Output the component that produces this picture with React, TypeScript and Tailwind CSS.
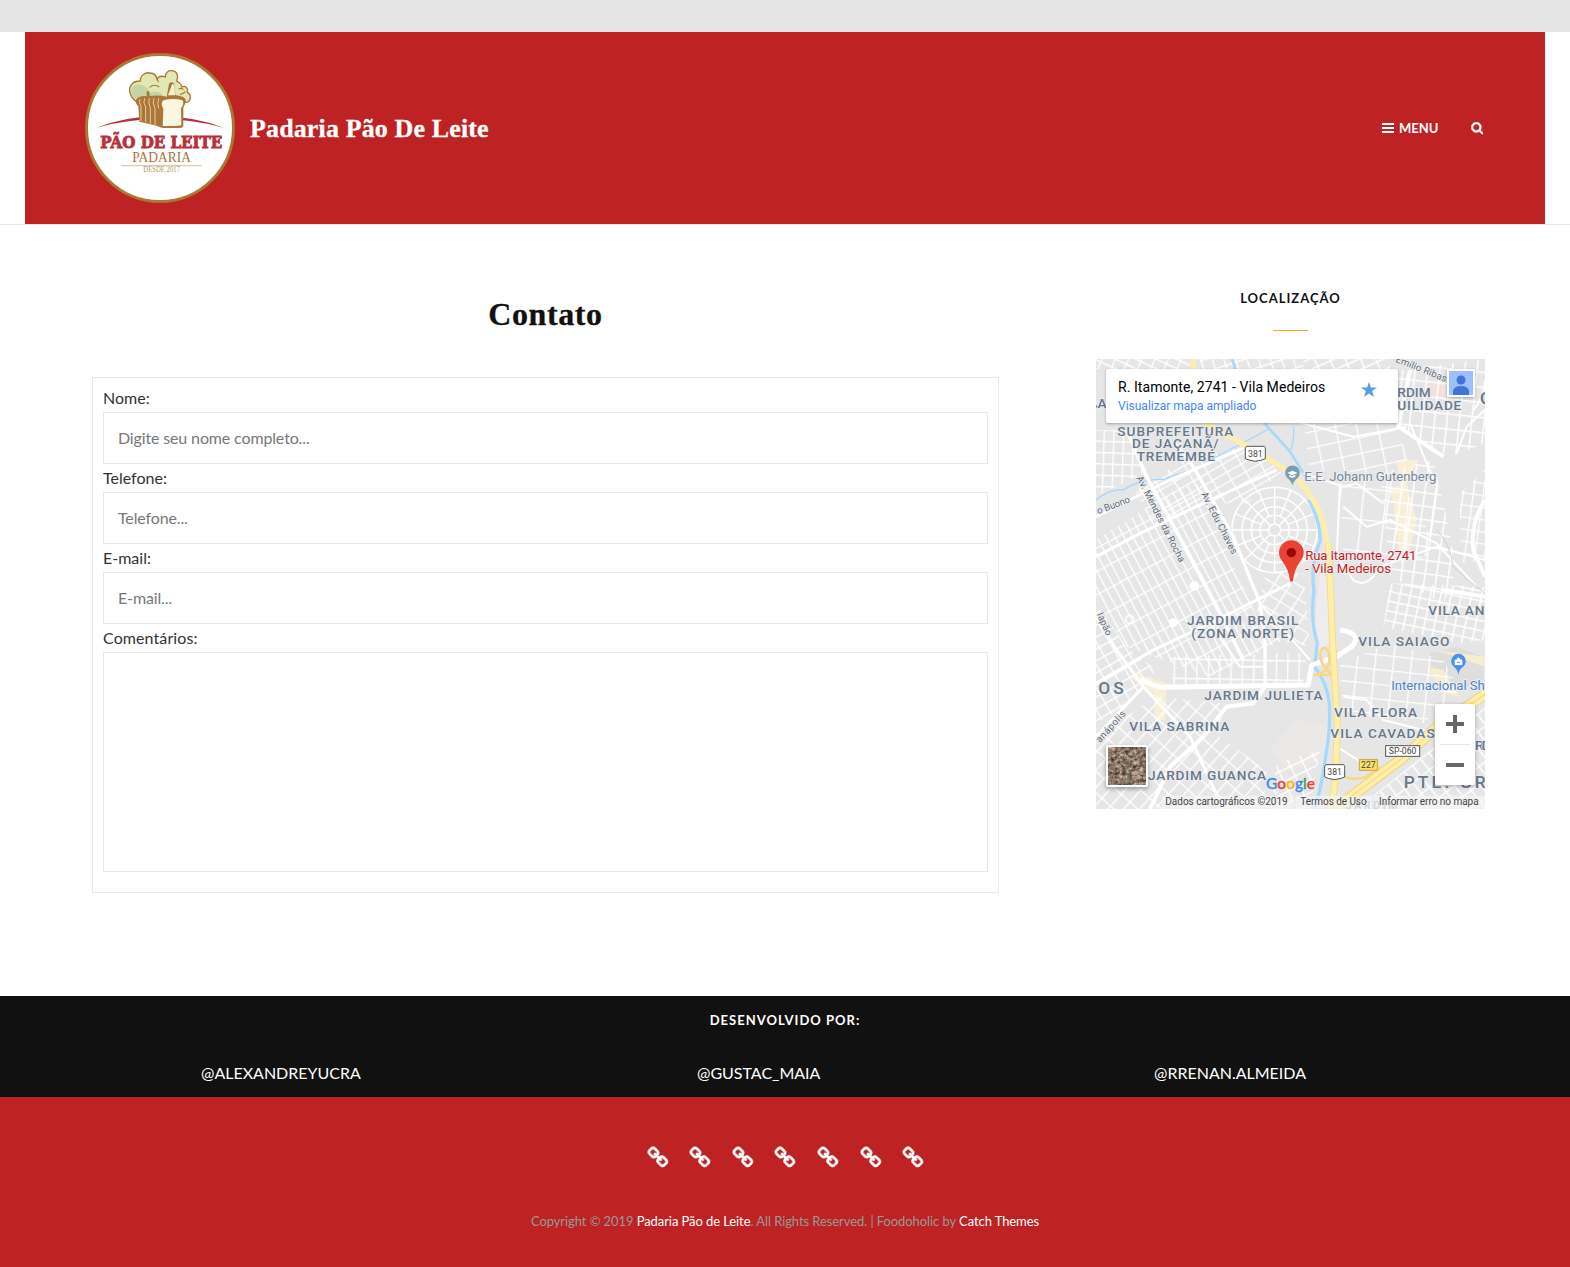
import React from "react";

const CHAIN =
  "M1456 1216q0-40-28-68l-208-208q-28-28-68-28-42 0-72 32 3 3 19 18.5t21.5 21.5 15 19 13 25.5 3.5 27.5q0 40-28 68t-68 28q-15 0-27.5-3.5t-25.5-13-19-15-21.5-21.5-18.5-19q-33 31-33 73 0 40 28 68l206 207q27 27 68 27 40 0 68-26l147-146q28-28 28-67zm-703-705q0-40-28-68l-206-207q-28-28-68-28-39 0-68 27l-147 146q-28 28-28 67 0 40 28 68l208 208q27 27 68 27 42 0 72-31-3-3-19-18.5t-21.5-21.5-15-19-13-25.5-3.5-27.5q0-40 28-68t68-28q15 0 27.5 3.5t25.5 13 19 15 21.5 21.5 18.5 19q33-31 33-73zm895 705q0 120-85 203l-147 146q-83 83-203 83-121 0-204-85l-206-207q-83-83-83-203 0-123 88-209l-88-88q-86 88-208 88-120 0-204-84l-208-208q-84-84-84-204t85-203l147-146q83-83 203-83 121 0 204 85l206 207q83 83 83 203 0 123-88 209l88 88q86-88 208-88 120 0 204 84l208 208q84 84 84 204z";
const SEARCH =
  "M1216 832q0-185-131.5-316.5t-316.5-131.5-316.5 131.5-131.5 316.5 131.5 316.5 316.5 131.5 316.5-131.5 131.5-316.5zm512 832q0 52-38 90t-90 38q-54 0-90-38l-343-342q-179 124-399 124-143 0-273.5-55.5t-225-150-150-225-55.5-273.5 55.5-273.5 150-225 225-150 273.5-55.5 273.5 55.5 225 150 150 225 55.5 273.5q0 220-124 399l343 343q37 37 37 90z";

function Logo() {
  return (
    <svg viewBox="15 24 450 450" className="block size-[150px] shrink-0">
      <circle cx="240" cy="249" r="220.500" fill="#fff" stroke="#ab7637" strokeWidth="9" />
      <path d="M50 248Q145 212 240 214Q340 214 431 248Q335 222 240 222Q145 222 50 248Z" fill="#b9303a" />
      <path
        d="M172 172C152 160 142 135 154 120C160 110 170 108 181 108C180 92 196 80 210 84C224 85 229 92 231 102C236 94 246 92 256 96C255 82 266 76 276 77C292 79 297 94 290 108C300 114 305 118 306 126C316 120 326 130 322 142C334 148 334 166 322 172Z"
        fill="#e0e9b4"
        stroke="#ab7637"
        strokeWidth="4"
      />
      <path d="M170 168C156 158 148 138 158 126C168 114 190 118 202 130C210 136 208 146 214 142C230 136 245 142 252 156L180 166Z" fill="#c5d3a5" />
      <path d="M209 127Q223 115 238 126M231 102Q236 108 234 112M296 132Q304 128 310 134M300 148Q312 146 316 140" fill="none" stroke="#ab7637" strokeWidth="3.500" />
      <path d="M168 164Q180 150 200 154L200 140Q204 136 208 140L209 153Q235 149 260 155L261 150L267 116Q275 108 283 116L286 150Q320 154 318 170L310 188V242Q308 249 300 249H250Q240 248 230 242L178 230L175 184Q166 176 168 164Z" fill="#ab7637" />
      <path d="M277 116L283 119L285 151H264Z" fill="#f8f3d2" />
      <path d="M250 166Q280 158 308 166Q314 178 303 190L304 240Q300 244 248 243L250 192Q240 176 250 166Z" fill="#faf6df" />
      <path
        d="M180 162Q176 172 183 184V228M194 160Q188 174 197 186V232M208 160Q203 174 211 188V236M222 160Q216 174 225 190V240M236 160Q231 176 236 190"
        fill="none"
        stroke="#efe0b9"
        strokeWidth="2.500"
      />
      <text x="61" y="310" textLength="366" lengthAdjust="spacingAndGlyphs" fontFamily="DejaVu Serif" fontWeight="700" fontSize="48" fill="#b9303a" stroke="#b9303a" strokeWidth="2.500">PÃO DE LEITE</text>
      <text x="157" y="352" textLength="176" lengthAdjust="spacingAndGlyphs" fontFamily="Liberation Serif" fontSize="43" fill="#ab7637">PADARIA</text>
      <path d="M124 362H365" stroke="#d9bd97" strokeWidth="3" />
      <text x="190" y="382" textLength="110" lengthAdjust="spacingAndGlyphs" fontFamily="Liberation Serif" fontSize="22" fill="#b8935f">DESDE 2017</text>
    </svg>
  );
}

type PatchData = { id: string; w: number; h: number; a: number; d: string; s?: number };

/* Blocks of minor streets: each polygon is filled with a rotated street grid. */
const patches: PatchData[] = [
  { id: "w1", w: 24, h: 62, a: -28, d: "M18 810L270 650L330 640L520 1090L600 1100L360 1220L110 1130L18 990Z", s: 4 },
  { id: "w2", w: 34, h: 31, a: -30, d: "M18 1000L110 1130L200 1200L90 1320L18 1360Z", s: 4 },
  { id: "w3", w: 50, h: 27, a: -30, d: "M130 660L300 560L470 530L580 600L470 700L350 700L200 770Z", s: 4 },
  { id: "w4", w: 29, h: 34, a: 2, d: "M18 480L120 480L160 610L18 680Z", s: 4 },
  { id: "n1", w: 36, h: 26, a: 25, d: "M18 267H300V297H18Z", s: 4 },
  { id: "n2", w: 33, h: 36, a: -18, d: "M330 267H640V297H330Z", s: 4 },
  { id: "n3", w: 42, h: 30, a: -24, d: "M640 267H900V300H640Z", s: 5 },
  { id: "n4", w: 37, h: 45, a: 6, d: "M925 300L1185 267V520L1080 560L960 500L925 460Z", s: 5 },
  { id: "n5", w: 62, h: 47, a: -12, d: "M640 460L900 460L960 560L900 610L660 600Z", s: 4 },
  { id: "c1", w: 68, h: 94, a: 6, d: "M750 650L880 620L980 700L1040 850L940 880L760 840Z", s: 4 },
  { id: "e1", w: 35, h: 40, a: 8, d: "M870 610L1030 570L1070 740L1100 900L1060 1000L900 920Z", s: 5 },
  { id: "e2", w: 30, h: 29, a: 12, d: "M900 940L1185 950V1110L1100 1120L880 1070Z", s: 5 },
  { id: "e3", w: 30, h: 36, a: 8, d: "M1110 670L1185 600V870L1110 880Z", s: 4 },
  { id: "e4", w: 54, h: 44, a: 6, d: "M750 1180L900 1120L1060 1170L1110 1260L1000 1360L760 1330Z", s: 4 },
  { id: "s1", w: 34, h: 58, a: 1, d: "M240 1160L530 1150L650 1150L640 1240L250 1250Z", s: 4 },
  { id: "s2", w: 35, h: 48, a: 42, d: "M18 1400L200 1280L400 1300L390 1400L530 1500L520 1617H18Z", s: 4 },
  { id: "s3", w: 31, h: 42, a: -38, d: "M800 1617L1185 1310V1617Z", s: 5 },
  { id: "s4", w: 42, h: 36, a: 32, d: "M530 900L640 910L660 1130L560 1110L500 1020Z", s: 4 },
  { id: "s5", w: 38, h: 32, a: -26, d: "M560 1480L690 1440L660 1617H540Z", s: 4 },
];

const spokes = Array.from({ length: 16 }, (_, i) => (i * Math.PI) / 8);

const areaLabels: [string, number, number, number, number?][] = [
  ["JA", 14, 415, 36],
  ["RDIM", 922, 382, 100],
  ["UILIDADE", 922, 421, 192],
  ["SUBPREFEITURA", 82, 497, 348],
  ["DE JAÇANÃ/", 126, 535, 260],
  ["TREMEMBÉ", 140, 574, 235],
  ["JARDIM BRASIL", 291, 1066, 334],
  ["(ZONA NORTE)", 304, 1105, 308],
  ["VILA AN", 1015, 1034, 168],
  ["VILA SAIAGO", 805, 1129, 273],
  ["OS", 25, 1271, 76, 52],
  ["JARDIM JULIETA", 343, 1289, 355],
  ["VILA FLORA", 732, 1342, 249],
  ["VILA SABRINA", 118, 1384, 300],
  ["VILA CAVADAS", 721, 1403, 313],
  ["RD", 1155, 1440, 46],
  ["JARDIM GUANCA", 174, 1531, 354],
  ["PTE. GR", 941, 1554, 246, 52],
  ["JARDIM", 768, 1617, 154, 30],
];

function MapDrawing() {
  return (
    <svg viewBox="18 267 1167 1350" preserveAspectRatio="none" className="block h-[450px] w-[389px]" fontFamily="Roboto">
      <defs>
        {patches.map((p) => (
          <pattern key={p.id} id={p.id} width={p.w} height={p.h} patternUnits="userSpaceOnUse" patternTransform={`rotate(${p.a})`}>
            <path d={`M0 2H${p.w}M2 0V${p.h}`} stroke="#fff" strokeWidth={p.s} />
          </pattern>
        ))}
      </defs>
      <rect x="18" y="267" width="1167" height="1350" fill="#e6e6e6" />
      <path d="M690 900L712 930L718 1120L680 1150L672 1080Z" fill="#eeecec" />
      <path d="M540 1440L620 1350L718 1370L700 1480L600 1500Z" fill="#ebe9e7" />
      <path d="M1020 330L1060 350L1070 385H1025Z" fill="#f5dede" />
      <path d="M1020 1150L1100 1130L1180 1160V1230L1080 1270L1020 1200Z" fill="#dedede" />
      <path d="M1010 1190L1060 1200L1110 1280L1060 1270ZM1030 1140L1185 1160V1190L1100 1160Z" fill="#f7edcf" />
      <path d="M140 1210L230 1240L225 1350H195L190 1270L120 1220ZM920 570L985 570L950 640L980 750L960 840H925L910 700L895 650H930Z" fill="#f8efd6" />

      {patches.map((p) => (
        <path key={p.id} d={p.d} fill={`url(#${p.id})`} />
      ))}

      {/* radial neighbourhood */}
      <circle cx="560" cy="780" r="118" fill="#e6e6e6" />
      <g fill="none" stroke="#fff" strokeWidth="4.500">
        <circle cx="554" cy="780" r="18" />
        <circle cx="554" cy="780" r="44" />
        <circle cx="554" cy="780" r="70" />
        <circle cx="554" cy="780" r="98" />
        <circle cx="554" cy="780" r="128" />
        {spokes.map((t, i) => {
          const inner = i % 2 ? 44 : 18;
          return <path key={t} d={`M${554 + inner * Math.cos(t)} ${780 + inner * Math.sin(t)}L${554 + 128 * Math.cos(t)} ${780 + 128 * Math.sin(t)}`} />;
        })}
      </g>

      {/* water */}
      <g fill="none" stroke="#a8d8fb">
        <path d="M425 267Q436 285 436 310L525 462L600 545L650 625" strokeWidth="8" />
        <path d="M655 690Q692 750 690 815Q660 880 672 960Q660 1050 682 1120L674 1190Q712 1240 718 1300Q722 1380 708 1450Q700 1530 674 1617" strokeWidth="10" />
        <path d="M18 690Q60 655 100 660Q150 625 220 628Q270 610 310 600L380 560L535 478M610 470Q615 510 600 545" strokeWidth="4" />
      </g>

      {/* local avenues */}
      <g fill="none" stroke="#fff" strokeWidth="9" strokeLinejoin="round">
        <path d="M18 740L240 630L470 530M18 860L150 790L360 690L560 600M18 1240L190 1140L360 1060L600 940" />
        <path d="M110 480L170 620L290 840L380 1010L460 1170" strokeWidth="11" />
        <path d="M255 520L310 590L430 800L510 1000L525 1120V1250" strokeWidth="10" />
        <path d="M18 1040L80 1140L160 1250L300 1400L400 1617M18 1400L160 1250" />
        <path d="M360 1060L450 1190H520M510 1000L660 1170M600 450L790 500L950 470M640 610L760 650L800 640L880 700" strokeWidth="6" />
        <path d="M750 640L740 860L790 930Q830 960 870 890L1040 830L1185 870M760 710L830 770L900 750L1040 820L1160 950" strokeWidth="6" />
        <path d="M1185 690Q1140 760 1150 840L1185 920M1185 980L1060 960M960 300L925 470L1060 560" strokeWidth="12" />
        <path d="M960 460L1040 650L1020 800M1100 550L1130 470L1185 420M1150 420Q1185 380 1185 330" strokeWidth="6" />
        <path d="M750 1080Q820 1090 785 1130L740 1160L665 1185L655 1245L210 1252L150 1230" strokeWidth="15" />
        <path d="M525 1250L490 1300L410 1310L330 1410L240 1490L180 1617" strokeWidth="12" />
        <path d="M760 1280L830 1290L880 1350L1000 1380L1060 1420M740 1430L850 1500" strokeWidth="6" />
        <circle cx="313" cy="948" r="10" fill="#fff" />
        <circle cx="119" cy="1048" r="12" strokeWidth="5" />
        <circle cx="250" cy="1058" r="9" fill="#fff" />
      </g>
      <path d="M1040 780Q1080 820 1090 890Q1130 930 1185 970" fill="none" stroke="#c9d3de" strokeWidth="3" />

      {/* expressways */}
      <g fill="none" strokeLinejoin="round">
        <g stroke="#f5d98b" strokeWidth="8">
          <path d="M680 1215Q730 1200 715 1145Q700 1120 690 1150Q690 1190 735 1220M670 1215H725M738 1500Q770 1540 830 1520L870 1490" />
        </g>
        <path d="M310 267V297L345 458L420 500L590 600Q690 680 706 790L716 850" stroke="#fdeead" strokeWidth="16" />
        <path d="M716 820L728 1120L742 1360L738 1500Q735 1560 720 1617" stroke="#f5d98b" strokeWidth="21" />
        <path d="M716 820L728 1120L742 1360L738 1500Q735 1560 720 1617" stroke="#fdeea9" strokeWidth="16" />
        <path d="M1190 1270L1040 1372L930 1470L740 1612" stroke="#f2d17b" strokeWidth="33" />
        <path d="M1190 1270L1040 1372L930 1470L740 1612" stroke="#fdeea9" strokeWidth="27" />
        <path d="M1190 1270L1040 1372L930 1470L740 1612" stroke="#f2d17b" strokeWidth="3" />
      </g>

      {/* shields */}
      <g stroke="#555" strokeWidth="3" fill="#fff">
        <path d="M470 529H523Q528 533 526 540V566Q520 570 496 574Q472 570 466 566V540Q464 533 470 529Z" />
        <path d="M708 1484H761Q766 1488 764 1495V1521Q758 1525 734 1529Q710 1525 704 1521V1495Q702 1488 708 1484Z" />
        <rect x="887" y="1427" width="102" height="32" />
        <rect x="808" y="1469" width="54" height="32" fill="#fcdf6c" stroke="#c9a634" />
      </g>
      <g fontSize="26" fill="#444" textAnchor="middle">
        <text x="496" y="560">381</text>
        <text x="734" y="1515">381</text>
        <text x="938" y="1452">SP-060</text>
        <text x="835" y="1495">227</text>
      </g>

      {/* place names */}
      <g fontWeight="500" fill="#66788c" stroke="#eeeeee" strokeWidth="5" paintOrder="stroke" strokeLinejoin="round">
        {areaLabels.map(([t, x, y, len, size]) => (
          <text key={t} x={x} y={y} textLength={len} fontSize={size ?? 41}>{t}</text>
        ))}
        <text x="1170" y="403" fontSize="52">C</text>
      </g>
      <g fontSize="29" fill="#5d6b7a" stroke="#f1f1f1" strokeWidth="4" paintOrder="stroke">
        <text transform="translate(915 275) rotate(22)" textLength="163">Emílio Ribas</text>
        <text transform="translate(25 733) rotate(-21)" textLength="104">o Buono</text>
        <text transform="translate(139 624) rotate(63)" textLength="286">Av. Mendes da Rocha</text>
        <text transform="translate(333 672) rotate(63)" textLength="205">Av. Edu Chaves</text>
        <text transform="translate(20 1033) rotate(66)" textLength="72">Iapão</text>
        <text transform="translate(30 1420) rotate(-48)" textLength="118">anápolis</text>
      </g>
      <g fontSize="39.500" strokeWidth="5" stroke="#f1f1f1" paintOrder="stroke">
        <text x="643" y="634" textLength="396" fill="#748799">E.E. Johann Gutenberg</text>
        <text x="646" y="871" textLength="333" fill="#c5221f">Rua Itamonte, 2741</text>
        <text x="646" y="910" textLength="257" fill="#c5221f">- Vila Medeiros</text>
        <text x="904" y="1261" textLength="280" fill="#4a83cb">Internacional Sh</text>
      </g>

      {/* pins */}
      <path d="M607 648Q605 634 592 624A22 22 0 1 1 623 624Q609 634 607 648Z" fill="#7b9eb0" />
      <path d="M592 609L607 602L623 609L607 616ZM598 614V620Q607 626 616 620V614L607 619Z" fill="#fff" />
      <path d="M1105 1214Q1103 1198 1090 1189A22 22 0 1 1 1121 1189Q1107 1198 1105 1214Z" fill="#4a90f2" />
      <path d="M1095 1170H1116V1184H1095ZM1101 1170V1166Q1105 1160 1110 1166V1170" fill="#fff" stroke="#fff" strokeWidth="2" />
      <path d="M1101 1177H1110" stroke="#4a90f2" strokeWidth="3" />
      <path d="M604 936Q610 936 610 928Q611 902 632 872A37 37 0 1 0 576 872Q598 902 599 928Q600 936 604 936Z" fill="#ea4335" />
      <circle cx="604" cy="848" r="14" fill="#960a0a" />

      {/* attribution strip */}
      <rect x="215" y="1577" width="970" height="40" fill="#f5f5f5" opacity="0.7" />
      <path d="M614 1577V1617M848 1577V1617" stroke="#ddd" strokeWidth="2" />
      <g fontSize="30" fill="#444">
        <text x="226" y="1605" textLength="367">Dados cartográficos ©2019</text>
        <text x="631" y="1605" textLength="199">Termos de Uso</text>
        <text x="867" y="1605" textLength="299">Informar erro no mapa</text>
      </g>
      <text x="528" y="1556" fontFamily="Lato" fontWeight="500" fontSize="48" textLength="147" lengthAdjust="spacingAndGlyphs" strokeWidth="1">
        <tspan fill="#4285f4" stroke="#4285f4">G</tspan><tspan fill="#ea4335" stroke="#ea4335">o</tspan><tspan fill="#fbbc05" stroke="#fbbc05">o</tspan><tspan fill="#4285f4" stroke="#4285f4">g</tspan><tspan fill="#34a853" stroke="#34a853">l</tspan><tspan fill="#ea4335" stroke="#ea4335">e</tspan>
      </text>
    </svg>
  );
}

function SatelliteThumb() {
  return (
    <svg viewBox="0 0 38 38" className="block size-full">
      <defs>
        <filter id="terrain" x="0" y="0" width="100%" height="100%" colorInterpolationFilters="sRGB">
          <feTurbulence type="fractalNoise" baseFrequency="0.28" numOctaves="4" seed="8" />
          <feColorMatrix values="1 0 0 0 0.05  0.9 0 0 0 0.02  0.8 0 0 0 0.01  0 0 0 0 1" />
        </filter>
      </defs>
      <rect width="38" height="38" filter="url(#terrain)" />
      <path d="M14 10L20 17L17 25L22 31L18 38M0 20L8 24M30 8L36 14" fill="none" stroke="#536049" strokeWidth="2.500" opacity="0.5" />
      <path d="M27 24L34 27M26 29L32 32" stroke="#c9b7ad" strokeWidth="2" opacity="0.7" />
    </svg>
  );
}

function GoogleMap() {
  return (
    <div className="relative h-[450px] w-[389px] overflow-hidden">
      <MapDrawing />
      <div className="absolute top-[10px] left-[10px] flex h-[54px] w-[292px] justify-between rounded-[2px] bg-white pt-[9px] pr-[21px] pl-3 font-['Roboto'] shadow-[0_1px_3px_rgba(0,0,0,0.3)]">
        <div>
          <div className="text-[14px] leading-[18px] font-[450] tracking-[0.06px] whitespace-nowrap text-black">R. Itamonte, 2741 - Vila Medeiros</div>
          <div className="text-[12px] leading-[21px] whitespace-nowrap text-[#4285f4]">Visualizar mapa ampliado</div>
        </div>
        <svg viewBox="0 0 16 15" className="mt-1 h-[15px] w-4">
          <path d="M8 0L9.900 5.500H16L11.200 8.900L13 15L8 11.400L3 15L4.800 8.900L0 5.500H6.100Z" fill="#5c9ce6" />
        </svg>
      </div>
      <div className="absolute top-[10px] left-[351px] size-7 border-2 border-white bg-[#9dbffb] shadow-[0_1px_3px_rgba(0,0,0,0.3)]">
        <svg viewBox="0 0 24 24" className="block size-6" fill="#3f73d9">
          <circle cx="12" cy="9" r="4.500" />
          <path d="M4 24V20Q5 15 12 15T20 20V24Z" />
        </svg>
      </div>
      <div className="absolute top-[386px] left-[10px] size-[42px] rounded-[2px] border-2 border-white shadow-[0_2px_4px_rgba(0,0,0,0.35)]">
        <SatelliteThumb />
      </div>
      <div className="absolute top-[345px] left-[339px] flex h-[81px] w-10 flex-col items-center rounded-[2px] bg-white shadow-[0_1px_4px_rgba(0,0,0,0.3)]">
        <div className="flex h-10 w-full items-center justify-center">
          <svg viewBox="0 0 18 18" className="size-[18px]" fill="#666"><path d="M7 0H11V7H18V11H11V18H7V11H0V7H7Z" /></svg>
        </div>
        <div className="h-px w-[30px] bg-[#e6e6e6]" />
        <div className="flex h-10 w-full items-center justify-center">
          <div className="h-1 w-[18px] bg-[#666]" />
        </div>
      </div>
    </div>
  );
}

function Field({ label, placeholder }: { label: string; placeholder: string }) {
  return (
    <label className="block">
      <span className="block h-7 leading-7">{label}</span>
      <input placeholder={placeholder} className="block h-[52px] w-full border border-[#e8e8e8] px-[14px] pb-0.5 text-[16px] tracking-[-0.14px] outline-none placeholder:text-[#777]" />
    </label>
  );
}

export default function App() {
  return (
    <div className="flex h-[1267px] w-[1570px] flex-col overflow-hidden bg-white font-['Lato',sans-serif] text-[16px] text-[#333]">
      <div className="h-8 bg-[#e4e4e4]" />
      <header className="border-b border-[#e8e8e8] px-[25px]">
        <div className="flex h-48 items-center bg-[#be2222] pr-[62px] pl-[60px] text-white">
          <Logo />
          <h1 className="mt-0.5 ml-[15px] font-['Liberation_Serif',serif] text-[26px] leading-8 font-bold tracking-[0.130px] whitespace-nowrap [-webkit-text-stroke:0.3px_#fff]">Padaria Pão De Leite</h1>
          <button className="ml-auto flex items-center text-[13px] leading-5 font-bold">
            <svg viewBox="0 0 12 10" className="mr-[5px] h-[10px] w-3" fill="#fff"><path d="M0 0H12V2H0ZM0 4H12V6H0ZM0 8H12V10H0Z" /></svg>
            MENU
          </button>
          <svg viewBox="34 98 1724 1724" className="mt-px ml-[32px] size-[12.500px]" fill="#fff" stroke="#fff" strokeWidth="60"><path d={SEARCH} /></svg>
        </div>
      </header>

      <main className="flex h-[771px]">
        <section className="ml-[92px] w-[907px] pt-[68px]">
          <h2 className="text-center font-['Liberation_Serif',serif] text-[32px] leading-[42px] font-bold tracking-[0.600px] text-[#111] [-webkit-text-stroke:0.3px_#111]">Contato</h2>
          <form className="mt-[42px] h-[516px] border border-[#e8e8e8] px-[10px] pt-[6px]">
            <Field label="Nome:" placeholder="Digite seu nome completo..." />
            <Field label="Telefone:" placeholder="Telefone..." />
            <Field label="E-mail:" placeholder="E-mail..." />
            <label className="block">
              <span className="block h-7 leading-7 tracking-[0.1px]">Comentários:</span>
              <textarea className="block h-[220px] w-full resize-none border border-[#e8e8e8] outline-none" />
            </label>
          </form>
        </section>
        <aside className="ml-[97px] flex w-[389px] flex-col items-center pt-[63px]">
          <h3 className="text-[13px] leading-5 font-bold tracking-[1px] text-[#111]">LOCALIZAÇÃO</h3>
          <div className="mt-[22px] mb-7 h-px w-[35px] bg-[#faa31f]" />
          <GoogleMap />
        </aside>
      </main>

      <section className="h-[101px] bg-[#111] text-white">
        <h3 className="pt-[14px] text-center text-[13px] leading-5 font-bold tracking-[1px]">DESENVOLVIDO POR:</h3>
        <div className="mt-[31px] flex pl-[201px] leading-6">
          <span className="w-[496px]">@ALEXANDREYUCRA</span>
          <span className="w-[457px]">@GUSTAC_MAIA</span>
          <span>@RRENAN.ALMEIDA</span>
        </div>
      </section>

      <footer className="flex flex-1 flex-col items-center bg-[#be2222] pt-[49px]">
        <div className="flex gap-[20.300px] pl-px">
          {[0, 1, 2, 3, 4, 5, 6].map((i) => (
            <svg key={i} viewBox="-40 -40 1792 1792" className="size-[22.300px]" fill="#fff" stroke="#fff" strokeWidth="40"><path d={CHAIN} /></svg>
          ))}
        </div>
        <p className="mt-[43px] text-[13px] leading-5 tracking-[-0.080px] whitespace-nowrap text-[#999]">
          Copyright © 2019 <span className="text-white">Padaria Pão de Leite</span>. All Rights Reserved. | Foodoholic by <span className="text-white">Catch Themes</span>
        </p>
      </footer>
    </div>
  );
}
